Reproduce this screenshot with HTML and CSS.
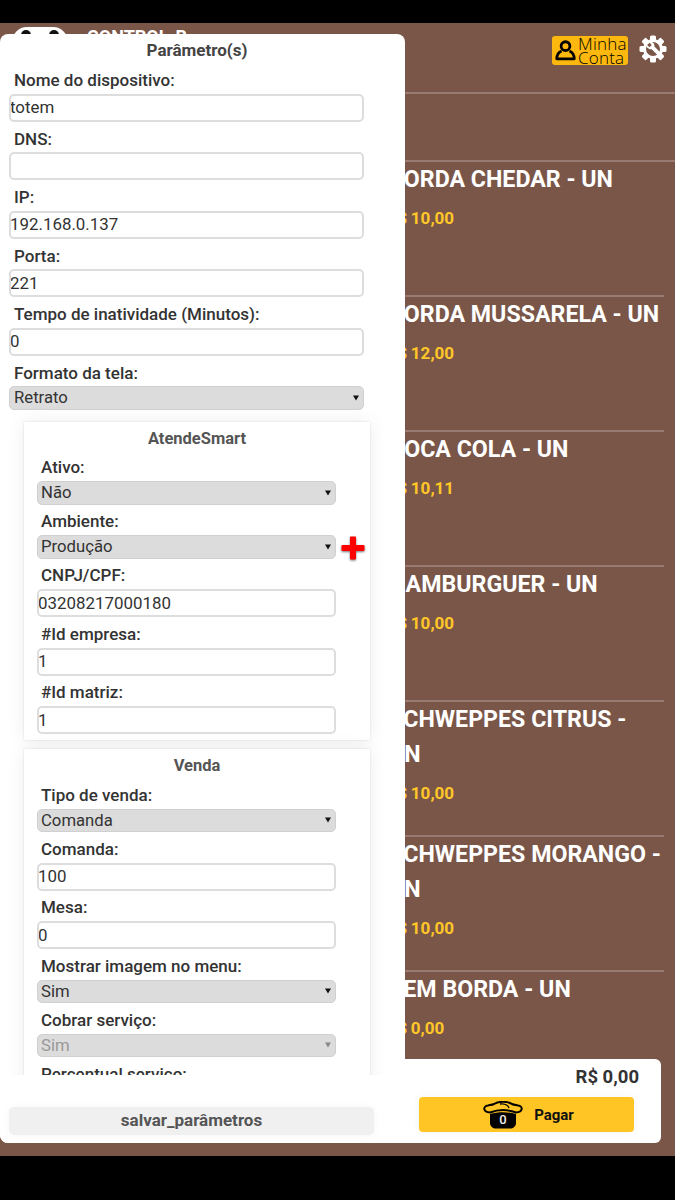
FILE: index.html
```html
<!DOCTYPE html>
<html lang="pt-BR">
<head>
    <meta charset="UTF-8">
    <meta name="viewport" content="width=device-width, initial-scale=1.0">
    <title>Parâmetros</title>
    <link rel="stylesheet" href="styles.css">
</head>
<body>
    <div class="status-bar"></div>

    <div class="app">
        <header class="top-bar">
            <div class="logo"><span class="logo-eye"></span><span class="logo-eye"></span></div>
            <div class="brand">CONTROL-B</div>
            <button class="account-btn">
                <svg class="account-icon" viewBox="0 0 24 24">
                    <circle cx="12" cy="7" r="5" fill="none" stroke="#000" stroke-width="3.200"/>
                    <path d="M7.500 12.500 C4 14 2 17 2 21.500 H22 C22 17 20 14 16.500 12.500" fill="none" stroke="#000" stroke-width="3.200" stroke-linejoin="round"/>
                </svg>
                <span class="account-text">Minha<br>Conta</span>
            </button>
            <svg class="gear-icon" viewBox="0 0 28 28">
                <g fill="#fff">
                    <rect x="11" y="0.500" width="6" height="6" rx="1.500"/>
                    <rect x="11" y="0.500" width="6" height="6" rx="1.500" transform="rotate(45 14 14)"/>
                    <rect x="11" y="0.500" width="6" height="6" rx="1.500" transform="rotate(90 14 14)"/>
                    <rect x="11" y="0.500" width="6" height="6" rx="1.500" transform="rotate(135 14 14)"/>
                    <rect x="11" y="0.500" width="6" height="6" rx="1.500" transform="rotate(180 14 14)"/>
                    <rect x="11" y="0.500" width="6" height="6" rx="1.500" transform="rotate(225 14 14)"/>
                    <rect x="11" y="0.500" width="6" height="6" rx="1.500" transform="rotate(270 14 14)"/>
                    <rect x="11" y="0.500" width="6" height="6" rx="1.500" transform="rotate(315 14 14)"/>
                </g>
                <circle cx="14" cy="14" r="8.500" fill="none" stroke="#fff" stroke-width="3"/>
                <path fill="#fff" d="M7.500 9.500 l3 2.800 2.200-2.200 -2.800-3 c3-1 6 1.200 5.500 4.400 l8 8 -2.700 2.700 -8-8 c-3.300.5-5.800-2.200-5.200-4.700z"/>
            </svg>
        </header>

        <div class="category-row"></div>

        <ul class="product-list">
            <li class="product">
                <div class="product-name">BORDA CHEDAR - UN</div>
                <div class="product-price">R$ 10,00</div>
            </li>
            <li class="product">
                <div class="product-name">BORDA MUSSARELA - UN</div>
                <div class="product-price">R$ 12,00</div>
            </li>
            <li class="product">
                <div class="product-name">COCA COLA - UN</div>
                <div class="product-price">R$ 10,11</div>
            </li>
            <li class="product">
                <div class="product-name">HAMBURGUER - UN</div>
                <div class="product-price">R$ 10,00</div>
            </li>
            <li class="product">
                <div class="product-name">SCHWEPPES CITRUS -<br>UN</div>
                <div class="product-price">R$ 10,00</div>
            </li>
            <li class="product">
                <div class="product-name">SCHWEPPES MORANGO -<br>UN</div>
                <div class="product-price">R$ 10,00</div>
            </li>
            <li class="product">
                <div class="product-name">SEM BORDA - UN</div>
                <div class="product-price">R$ 0,00</div>
            </li>
        </ul>

        <div class="cart-card">
            <div class="cart-total">R$ 0,00</div>
            <button class="pay-btn">
                <svg class="pot-icon" viewBox="0 0 40 28">
                    <path d="M7 13 C15 10.500 25 10.500 33 13 V22 C33 25.500 30 27.500 27 27.500 H13 C10 27.500 7 25.500 7 22z" fill="#000"/>
                    <path d="M7 11.500 C0 11.500 -.5 5 5 4.500 C7 4 9 4 11 3 C16 0 24 0 29 3 C31 4 33 4 35 4.500 C40.500 5 40 11.500 33 11.500 C25 8.500 15 8.500 7 11.500z" fill="none" stroke="#000" stroke-width="2"/>
                    <path d="M17 3 C21 2.500 25 4 26 7" fill="none" stroke="#000" stroke-width="1.400"/>
                    <text class="pot-count" x="20" y="22.500">0</text>
                </svg>
                <span>Pagar</span>
            </button>
        </div>

        <section class="modal">
            <h2 class="modal-title">Parâmetro(s)</h2>
            <div class="modal-body">
                <label class="field-label">Nome do dispositivo:</label>
                <input class="field-input" type="text" value="totem">
                <label class="field-label">DNS:</label>
                <input class="field-input" type="text" value="">
                <label class="field-label">IP:</label>
                <input class="field-input" type="text" value="192.168.0.137">
                <label class="field-label">Porta:</label>
                <input class="field-input" type="text" value="221">
                <label class="field-label">Tempo de inatividade (Minutos):</label>
                <input class="field-input" type="text" value="0">
                <label class="field-label">Formato da tela:</label>
                <select class="field-select"><option>Retrato</option></select>

                <div class="panel">
                    <h3 class="panel-title">AtendeSmart</h3>
                    <label class="field-label">Ativo:</label>
                    <select class="field-select"><option>Não</option></select>
                    <label class="field-label">Ambiente:</label>
                    <div class="select-row">
                        <select class="field-select"><option>Produção</option></select>
                        <svg class="plus-icon" viewBox="0 0 24 24">
                            <path d="M9 1.500 Q9 .5 10 .5 H14 Q15 .5 15 1.500 V9 H22.500 Q23.500 9 23.500 10 V14 Q23.500 15 22.500 15 H15 V22.500 Q15 23.500 14 23.500 H10 Q9 23.500 9 22.500 V15 H1.500 Q.5 15 .5 14 V10 Q.5 9 1.500 9 H9z" fill="#f00"/>
                        </svg>
                    </div>
                    <label class="field-label">CNPJ/CPF:</label>
                    <input class="field-input" type="text" value="03208217000180">
                    <label class="field-label">#Id empresa:</label>
                    <input class="field-input" type="text" value="1">
                    <label class="field-label">#Id matriz:</label>
                    <input class="field-input" type="text" value="1">
                </div>

                <div class="panel panel-sale">
                    <h3 class="panel-title">Venda</h3>
                    <label class="field-label">Tipo de venda:</label>
                    <select class="field-select"><option>Comanda</option></select>
                    <label class="field-label">Comanda:</label>
                    <input class="field-input" type="text" value="100">
                    <label class="field-label">Mesa:</label>
                    <input class="field-input" type="text" value="0">
                    <label class="field-label">Mostrar imagem no menu:</label>
                    <select class="field-select"><option>Sim</option></select>
                    <label class="field-label">Cobrar serviço:</label>
                    <select class="field-select" disabled><option>Sim</option></select>
                    <label class="field-label">Percentual serviço:</label>
                    <input class="field-input" type="text" value="10">
                </div>
            </div>
            <div class="modal-footer">
                <button class="save-btn">salvar_parâmetros</button>
            </div>
        </section>
    </div>

    <div class="nav-bar"></div>
</body>
</html>
```

FILE: styles.css
```css
* {
    box-sizing: border-box;
}
body {
    margin: 0;
    height: 1200px;
    display: flex;
    flex-direction: column;
    background: #000;
    font-family: Roboto, "Liberation Sans", sans-serif;
    overflow: hidden;
}
.status-bar {
    height: 23px;
    background: #000;
}
.nav-bar {
    height: 44px;
    background: #000;
}
.app {
    position: relative;
    flex: 1;
    background: #7a5648;
    overflow: hidden;
}

/* barra do topo */
.top-bar {
    display: flex;
    align-items: flex-start;
    height: 71px;
    border-bottom: 2px solid rgba(255,255,255,0.22);
    padding: 4px 8px 0 12px;
}
.logo {
    display: flex;
    justify-content: space-around;
    width: 56px;
    height: 30px;
    background: #fff;
    border-radius: 15px;
    padding-top: 3px;
}
.logo-eye {
    width: 10px;
    height: 10px;
    background: #111;
    border-radius: 50%;
}
.brand {
    margin-left: 19px;
    margin-top: -1px;
    color: #fff;
    font-size: 18px;
    font-weight: 700;
    flex: 1;
}
.account-btn {
    display: flex;
    align-items: center;
    gap: 2px;
    width: 76px;
    height: 29px;
    margin-top: 9px;
    padding: 0 0 0 3px;
    background: #fdb80f;
    border: none;
    border-radius: 3px;
}
.account-icon {
    flex: none;
    width: 21px;
    height: 21px;
}
.account-text {
    font-family: "Open Sans", sans-serif;
    font-size: 17px;
    font-weight: 300;
    line-height: 14px;
    color: #000;
    text-align: left;
    letter-spacing: 0.2px;
}
.gear-icon {
    width: 28px;
    height: 28px;
    margin-top: 8px;
    margin-left: 11px;
}
.category-row {
    height: 68px;
    border-bottom: 2px solid rgba(255,255,255,0.22);
}

/* lista de produtos */
.product-list {
    list-style: none;
    margin: 0 11px 0 0;
    padding: 0;
}
.product {
    height: 135px;
    padding: 0 0 0 389px;
    border-bottom: 2px solid rgba(255,255,255,0.22);
}
.product:last-child {
    border-bottom: none;
}
.product-name {
    color: #fff;
    font-size: 23.200px;
    font-weight: 700;
    line-height: 35px;
}
.product-price {
    margin: 11px 0 0 -2.500px;
    color: #ffc727;
    font-size: 17px;
    font-weight: 700;
    line-height: 20px;
    word-spacing: -0.500px;
}

/* carrinho */
.cart-card {
    position: absolute;
    left: 300px;
    right: 14px;
    bottom: 13px;
    height: 84px;
    background: #fff;
    border-radius: 6px;
    padding-right: 22px;
}
.cart-total {
    padding-top: 8px;
    text-align: right;
    font-size: 18.500px;
    font-weight: 700;
    line-height: 20px;
    color: #333;
}
.pay-btn {
    display: flex;
    align-items: center;
    justify-content: center;
    gap: 11px;
    margin: 10px 5px 0 119px;
    width: 215px;
    height: 35px;
    padding: 0 0 0 4px;
    background: #ffc524;
    border: none;
    border-radius: 4px;
    font-family: inherit;
    font-size: 15px;
    font-weight: 700;
    color: #111;
    box-shadow: 0 0 10px rgba(0,0,0,0.05);
}
.pot-icon {
    width: 40px;
    height: 28px;
}
.pot-count {
    fill: #eee;
    font-family: Roboto, sans-serif;
    font-size: 13px;
    font-weight: 500;
    text-anchor: middle;
}

/* modal de parametros */
.modal {
    position: absolute;
    left: 0;
    top: 11px;
    width: 405px;
    height: 1109px;
    display: flex;
    flex-direction: column;
    background: #fff;
    border-radius: 8px;
}
.modal-title {
    flex: none;
    margin: 0;
    height: 29px;
    color: #444;
    font-size: 17px;
    font-weight: 700;
    line-height: 33px;
    text-align: center;
    padding-right: 11px;
}
.modal-body {
    flex: 1;
    overflow: hidden;
    padding: 0 41px 0 9px;
}
.field-label {
    display: block;
    height: 30.500px;
    padding: 3px 0 0 5px;
    color: #333;
    font-size: 17px;
    font-weight: 500;
    line-height: 29px;
}
.panel .field-label {
    padding: 2.500px 0 0 4px;
}
.field-input {
    display: block;
    width: 100%;
    height: 28px;
    margin: 0;
    padding: 0 0 1px;
    background: #fff;
    border: 2px solid #ddd;
    border-radius: 5px;
    font-family: inherit;
    font-size: 16.900px;
    color: #333;
    text-indent: -1px;
}
.field-select {
    display: block;
    width: 100%;
    height: 23.500px;
    margin: 0;
    padding: 0 0 0 3px;
    appearance: none;
    background-color: #dcdcdc;
    background-image: url("data:image/svg+xml,%3Csvg xmlns='http://www.w3.org/2000/svg' width='6' height='6'%3E%3Cpath d='M0 0.500H6L3 5.500z' fill='%23111'/%3E%3C/svg%3E");
    background-repeat: no-repeat;
    background-position: right 4px center;
    border: 1px solid #d0d0d0;
    border-radius: 5px;
    font-family: inherit;
    font-size: 16.700px;
    color: #333;
    opacity: 1;
}
.modal-body > .field-select {
    padding-left: 4px;
}
.field-select:disabled {
    color: #999;
    background-image: url("data:image/svg+xml,%3Csvg xmlns='http://www.w3.org/2000/svg' width='6' height='6'%3E%3Cpath d='M0 0.500H6L3 5.500z' fill='%23888'/%3E%3C/svg%3E");
}
.select-row {
    display: flex;
    align-items: center;
    height: 23.500px;
    width: 327px;
    gap: 5px;
}
.select-row .field-select {
    flex: none;
    width: 299px;
}
.plus-icon {
    flex: none;
    width: 24px;
    height: 24px;
    margin-top: 2px;
    filter: drop-shadow(0 1px 1px rgba(0,0,0,0.55));
}
.panel {
    width: 346px;
    margin: 12px 0 0 15px;
    padding: 0 34px 6px 13px;
    background: #fff;
    box-shadow: 0 0 18px rgba(0,0,0,0.07), 0 0 2px rgba(0,0,0,0.12);
}
.panel-sale {
    margin-top: 9px;
}
.panel-title {
    margin: 0;
    height: 29px;
    color: #555;
    font-size: 16.500px;
    font-weight: 700;
    line-height: 34px;
    text-align: center;
    padding-left: 21px;
}
.modal-footer {
    flex: none;
    height: 68px;
    padding: 32px 31px 8px 9px;
    background: #fff;
    border-radius: 0 0 8px 8px;
}
.save-btn {
    display: block;
    width: 100%;
    height: 28px;
    padding: 0 0 2px;
    background: #f0f0f0;
    border: none;
    border-radius: 5px;
    font-family: inherit;
    font-size: 17px;
    font-weight: 700;
    color: #555;
    box-shadow: 0 0 10px rgba(0,0,0,0.04);
}
```
